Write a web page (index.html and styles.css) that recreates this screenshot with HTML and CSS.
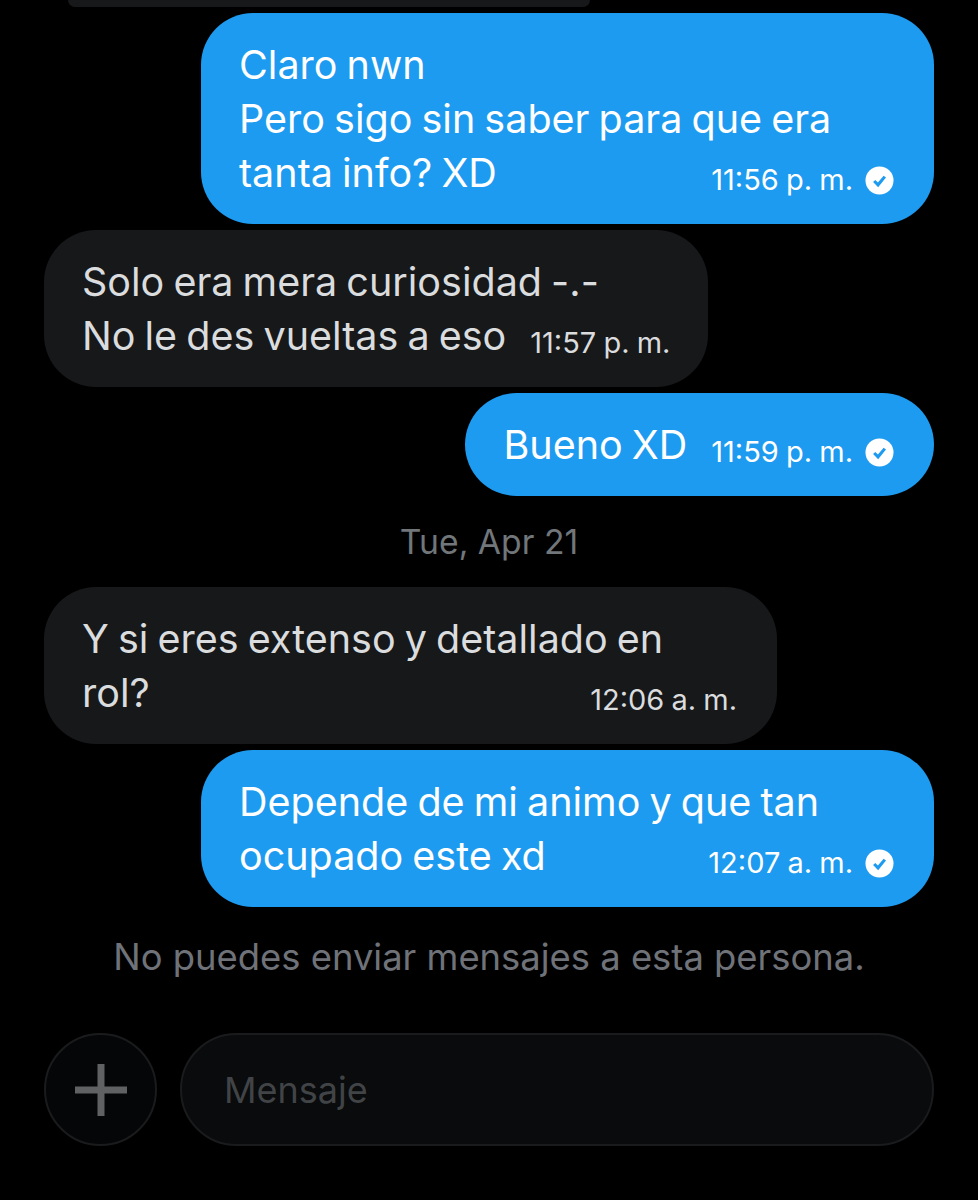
FILE: index.html
```html
<!DOCTYPE html>
<html lang="en">
<head>
    <meta charset="UTF-8">
    <meta name="viewport" content="width=device-width, initial-scale=1.0">
    <title>Mensajes</title>
    <link rel="stylesheet" href="styles.css">
</head>
<body>
    <div id="chat">
        <div class="prev-bubble"></div>

        <div class="bubble sent wide">
            <div>Claro nwn</div>
            <div>Pero sigo sin saber para que era</div>
            <div class="last-line">
                <span>tanta info? XD</span>
                <span class="meta">11:56 p. m.
                    <svg class="check" viewBox="0 0 30 30"><circle cx="15" cy="15" r="14.5" fill="#fff"/><path d="M9.5 15.5l4 4 7-8.5" fill="none" stroke="#1d9bf0" stroke-width="3.2"/></svg>
                </span>
            </div>
        </div>

        <div class="bubble received">
            <div>Solo era mera curiosidad -.-</div>
            <div class="last-line">
                <span>No le des vueltas a eso</span>
                <span class="meta">11:57 p. m.</span>
            </div>
        </div>

        <div class="bubble sent">
            <div class="last-line">
                <span>Bueno XD</span>
                <span class="meta">11:59 p. m.
                    <svg class="check" viewBox="0 0 30 30"><circle cx="15" cy="15" r="14.5" fill="#fff"/><path d="M9.5 15.5l4 4 7-8.5" fill="none" stroke="#1d9bf0" stroke-width="3.2"/></svg>
                </span>
            </div>
        </div>

        <div class="date">Tue, Apr 21</div>

        <div class="bubble received wide">
            <div>Y si eres extenso y detallado en</div>
            <div class="last-line">
                <span>rol?</span>
                <span class="meta">12:06 a. m.</span>
            </div>
        </div>

        <div class="bubble sent wide">
            <div>Depende de mi animo y que tan</div>
            <div class="last-line">
                <span>ocupado este xd</span>
                <span class="meta">12:07 a. m.
                    <svg class="check" viewBox="0 0 30 30"><circle cx="15" cy="15" r="14.5" fill="#fff"/><path d="M9.5 15.5l4 4 7-8.5" fill="none" stroke="#1d9bf0" stroke-width="3.2"/></svg>
                </span>
            </div>
        </div>

        <div class="notice">No puedes enviar mensajes a esta persona.</div>

        <div class="composer">
            <div class="add-btn">
                <svg viewBox="0 0 52 52" width="52" height="52"><path d="M26 0v52M0 26h52" stroke="#5f6163" stroke-width="7" fill="none"/></svg>
            </div>
            <div class="input-box">Mensaje</div>
        </div>
    </div>
</body>
</html>
```

FILE: styles.css
```css
body {
    font-family: Inter, Roboto, "Liberation Sans", sans-serif;
    margin: 0;
    background-color: #000;
    color: #dadcde;
}
#chat {
    display: flex;
    flex-direction: column;
    height: 1200px;
    padding: 0 44px;
    box-sizing: border-box;
    overflow: hidden;
}
.prev-bubble {
    width: 522px;
    height: 7px;
    margin-left: 24px;
    background-color: #17181a;
    border-radius: 0 0 40px 40px;
}
.bubble {
    box-sizing: border-box;
    width: fit-content;
    padding: 25px 40px 24px 38px;
    border-radius: 52px;
    font-size: 39.5px;
    word-spacing: -2px;
    line-height: 54px;
    margin-top: 6px;
}
.bubble.wide {
    width: 733px;
}
.sent {
    align-self: flex-end;
    background-color: #1d9bf0;
    color: #fff;
}
.received {
    align-self: flex-start;
    padding-right: 38px;
    background-color: #17181a;
    color: #dadcde;
}
.last-line {
    display: flex;
    justify-content: space-between;
    gap: 24px;
    height: 54px;
}
.meta {
    display: flex;
    align-items: center;
    gap: 12px;
    height: 54px;
    box-sizing: border-box;
    padding-top: 14px;
    font-size: 29px;
    word-spacing: -1px;
    white-space: nowrap;
}
.wide.received .meta {
    margin-right: 2px;
}
.check {
    width: 29px;
    height: 29px;
}
.date {
    margin: 23px 0 16px;
    text-align: center;
    font-size: 33.7px;
    line-height: 46px;
    color: #71767b;
}
.notice {
    margin-top: 26px;
    text-align: center;
    font-size: 36.4px;
    line-height: 48px;
    color: #6f7379;
}
.composer {
    display: flex;
    gap: 23px;
    margin-top: 52px;
}
.add-btn {
    flex: 0 0 auto;
    width: 113px;
    height: 113px;
    box-sizing: border-box;
    border: 2px solid #1a1b1d;
    border-radius: 50%;
    background-color: #050607;
    display: flex;
    align-items: center;
    justify-content: center;
}
.input-box {
    flex: 1;
    height: 113px;
    box-sizing: border-box;
    border: 2px solid #1a1b1d;
    border-radius: 57px;
    background-color: #0a0b0c;
    padding-left: 42px;
    display: flex;
    align-items: center;
    font-size: 36px;
    color: #414447;
}
```
